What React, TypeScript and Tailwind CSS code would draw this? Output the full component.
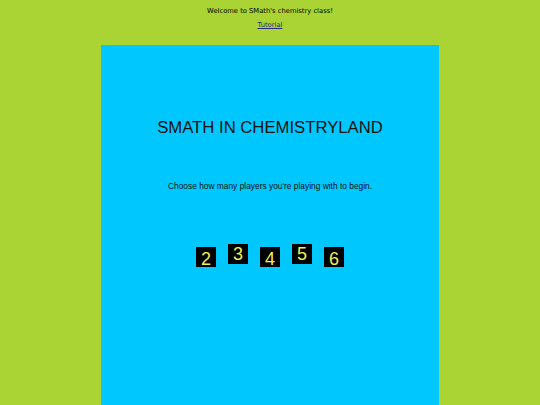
import React from 'react'

const players = [
  { n: 2, raised: false },
  { n: 3, raised: true },
  { n: 4, raised: false },
  { n: 5, raised: true },
  { n: 6, raised: false },
]

export default function App() {
  return (
    <div className="min-h-screen bg-[#a9d433] flex flex-col items-center">
      {/* Header */}
      <p className="mt-[7px] text-[6.75px] leading-[8px] text-black font-['DejaVu_Sans',sans-serif]">
        Welcome to SMath's chemistry class!
      </p>
      <a
        href="#"
        className="mt-[6px] text-[6.75px] leading-[8px] text-[#2a2a80] underline font-['DejaVu_Sans',sans-serif]"
      >
        Tutorial
      </a>

      {/* Game board */}
      <div className="mt-[16px] w-[338px] min-h-[360px] bg-[#00c8ff] flex flex-col items-center font-['Liberation_Sans',Arial,sans-serif] pb-10">
        <h1 className="mt-[73px] text-[16.7px] leading-[20px] text-[#111]">
          SMATH IN CHEMISTRYLAND
        </h1>
        <p className="mt-[43px] text-[8.4px] leading-[10px] text-[#111]">
          Choose how many players you're playing with to begin.
        </p>
        <div className="mt-[53px] flex items-start gap-[12px]">
          {players.map((p) => (
            <button
              key={p.n}
              className={
                p.raised
                  ? 'w-5 h-5 bg-black text-[#f0f050] text-[18px] leading-[20px] text-center'
                  : 'mt-[3px] w-5 h-5 pt-[2px] bg-black text-[#f0f050] text-[18px] leading-[20px] text-center overflow-visible'
              }
            >
              {p.n}
            </button>
          ))}
        </div>
      </div>
    </div>
  )
}
